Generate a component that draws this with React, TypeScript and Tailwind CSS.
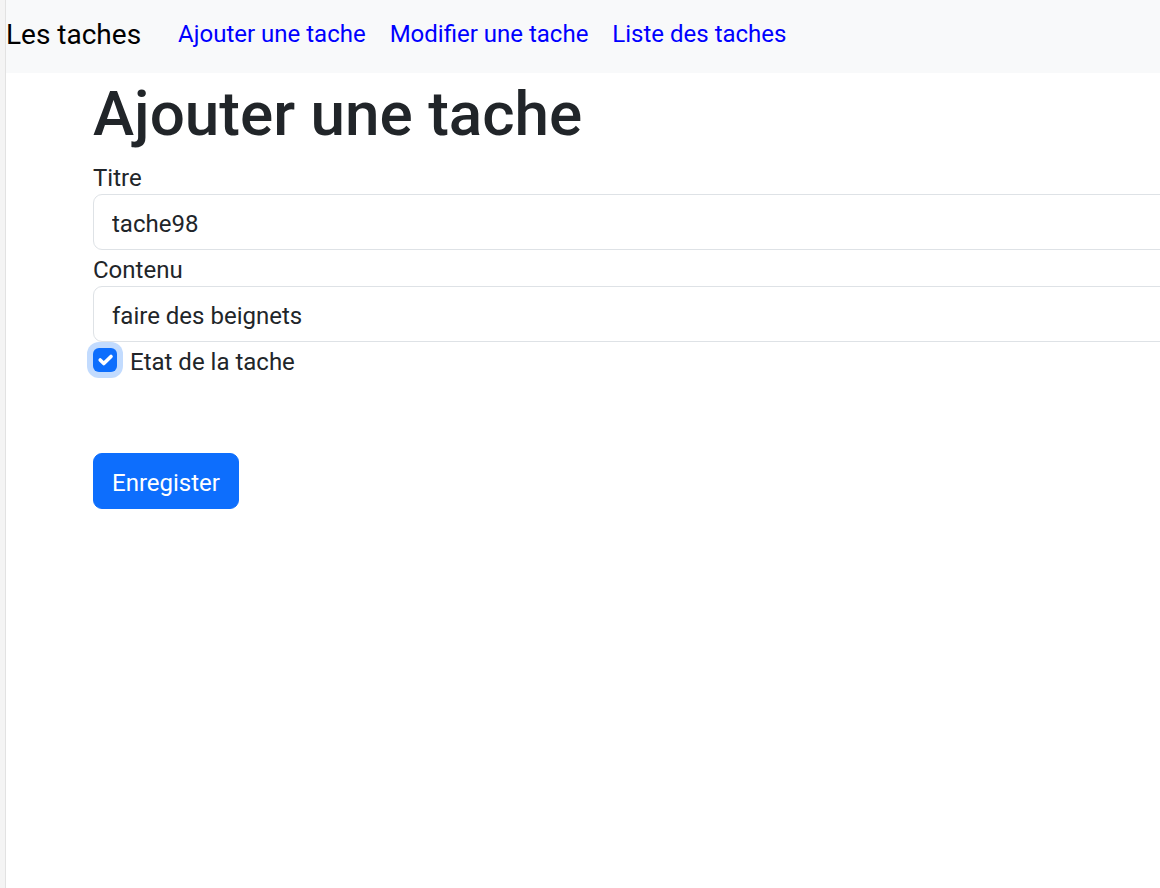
import React from "react";

export default function App() {
  return (
    <div className="flex w-[1160px] h-[888px] overflow-hidden bg-white font-['Roboto',sans-serif]">
      <div className="w-[6px] shrink-0 bg-[#f4f4f4] border-r border-[#e2e2e2]" />
      <div className="flex-1 min-w-0 overflow-hidden">
        <nav className="h-[73px] bg-[#f8f9fa] flex items-start">
          <span className="mt-[14px] text-[28px] leading-[42px] text-black mr-[37px]">Les taches</span>
          <div className="mt-[16px] flex items-center gap-[24px] text-[24px] leading-[36px] text-[#0000ff]">
            <a href="#">Ajouter une tache</a>
            <a href="#">Modifier une tache</a>
            <a href="#">Liste des taches</a>
          </div>
        </nav>
        <div className="w-[1400px] pl-[87px] text-[#212529]">
          <h1 className="mt-[5px] text-[62px] leading-[72px] font-medium mb-[8px]">Ajouter une tache</h1>
          <form onSubmit={(e) => e.preventDefault()}>
            <label className="block h-[36px] pt-[4px] text-[24px] leading-[32px]">Titre</label>
            <input
              readOnly
              value="tache98"
              className="block w-full h-[56px] px-[18px] pt-[4px] text-[24px] leading-[36px] text-[#212529] border border-[#dee2e6] rounded-[9px] outline-none"
            />
            <label className="block h-[36px] pt-[4px] text-[24px] leading-[32px]">Contenu</label>
            <input
              readOnly
              value="faire des beignets"
              className="block w-full h-[56px] px-[18px] pt-[4px] text-[24px] leading-[36px] text-[#212529] border border-[#dee2e6] rounded-[9px] outline-none"
            />
            <div className="flex items-center h-[36px]">
              <span className="w-[24px] h-[24px] rounded-[6px] bg-[#0d6efd] shadow-[0_0_0_6px_rgba(13,110,253,0.25)] flex items-center justify-center">
                <svg width="24" height="24" viewBox="0 0 20 20" fill="none">
                  <path d="M6 10l3 3l6-6" stroke="#fff" strokeWidth="3" strokeLinecap="round" strokeLinejoin="round" />
                </svg>
              </span>
              <span className="ml-[13px] h-[36px] pt-[4px] text-[24px] leading-[32px]">Etat de la tache</span>
            </div>
            <div className="pt-[75px]">
              <button
                type="submit"
                className="h-[56px] px-[18px] pt-[4px] text-[24px] leading-[36px] text-white bg-[#0d6efd] border border-[#0d6efd] rounded-[9px]"
              >
                Enregister
              </button>
            </div>
          </form>
        </div>
      </div>
    </div>
  );
}
